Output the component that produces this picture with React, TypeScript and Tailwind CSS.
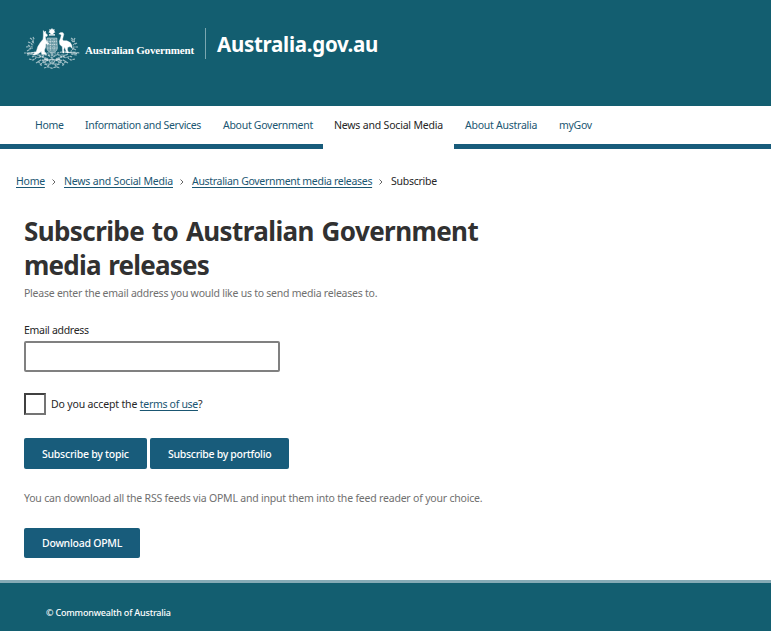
import type { ReactNode } from "react";

function CoatOfArms() {
  return (
    <svg viewBox="0 0 56 42" className="block h-[42px] w-[56px] shrink-0" fill="none">
      {/* commonwealth star and wreath */}
      <path d="M28 0l.9 1.6 1.8-.4-.5 1.8 1.2 1.3-1.7.6-.5 1.3h-2.6l-.4-1.3-1.8-.6 1.2-1.3-.4-1.8 1.8.4z" fill="#fff" />
      <path d="M25 6.9h6" stroke="#fff" strokeWidth="1.3" />
      {/* kangaroo */}
      <path d="M19.4 2.6l1.1 1.7.9-1.3.3 2.2 1.8 1.8-.5 1.2-1.8.4.6 2.6 1.3 3 1.6 1-.2.9-2.7-.4-.2 3.4-1.2 3 .2 2.6 1.6.8-.2.8h-4.2l-.4-3-2.8 2.2-1.8.4-1.8 1.2-2.4-.3 3.6-2.8 1.7-5.4 2.7-4.4 2.5-2.9.3-3.4z" fill="#fff" stroke="#fff" strokeWidth=".5" />
      {/* emu */}
      <path d="M34.8 5.8l2-1.4 2.2.3.8 1.6-.6 2.4-.7 2.6.8 1.4 3.6.1 3.4 1.8 1.6 2.8.2 2.8-2-1.6-2.3.6-.4 2.1.9 3.6h-1.4l-1.6-3.8-.6-2-1 2.3.4 3.6h-1.4l-.3-4-.1-2.2-2.5-2.3-.5-3.2 1.3-3.3.7-3.1-1.1-.6z" fill="#fff" stroke="#fff" strokeWidth=".4" />
      {/* quartered shield */}
      <path d="M23.3 10h9.6l.5 10c0 3-3 4.3-5.3 5.5-2.4-1.2-5.3-2.5-5.3-5.5z" fill="#fff" fillOpacity=".38" stroke="#fff" strokeOpacity=".5" strokeWidth=".8" />
      <path d="M23 13.4h10M23 16.6h10M23.2 20h10M26.4 11v12M30 11v12" stroke="#fff" strokeOpacity=".6" strokeWidth=".9" strokeDasharray="1.4 .9" />
      <g stroke="#fff" strokeOpacity=".58" strokeWidth="1.2" strokeDasharray="2.6 .7">
        {/* wattle sprays */}
        <path d="M3 23c2-1 4-2 5-5M4 14l3 1 2 3M6 10l3 2 .5 3M2 19l4-.5M9 9l1.5 3M4 17l3 2M5 21l4-1M8 13l2 3M47 10l3 2 1 4M51 10l-2 4M53 15l-4 2M54 19l-5 0M52 22l-4-2M49 14l-2-3M50 20l-3 3" />
        {/* grassy mount */}
        <path d="M0 25h7l4-1h8l4 1h10l5-1h10l8 1M3 27l6-1M12 26l6 3 5-3M33 26l5 3 6-3M47 26l6 1M14 27h28" />
        {/* scroll and foliage */}
        <path d="M8 29c3-2 5 2 8 0s4 3 7 1M48 29c-3-2-5 2-8 0s-4 3-7 1M5 31l4 1 3-2M51 31l-4 1-3-2M12 35l5-3 5 2M44 35l-5-3-5 2M16 37l3-3 5 4M40 37l-3-3-5 4M23 30l3 4-2 5M33 30l-3 4 2 5M14 33l4 5M42 33l-4 5M21 29v8M35 29v8M18 32h20M21 36h14" />
        <path d="M24 27l4 3 4-3M22 33l6-2 6 2M20 40l4-1.2 4 1.5 4-1.5 4 1.2M28 26v8" />
      </g>
      <path d="M3 25.4l12-1.3M41 24.1l12 1.3M20 31l4 1M32 32l4-1M26 35h4" stroke="#fff" strokeWidth="1" strokeOpacity=".8" />
    </svg>
  );
}

function NavItem({ size, active, children }: { size: string; active?: boolean; children: ReactNode }) {
  return (
    <li className={`${size} border-b-5 pt-[12px] whitespace-nowrap ${active ? "border-white text-[#262626]" : "border-[#185c7b] text-[#1a5672]"}`}>
      <a className="block pl-[11px] leading-[15px]">{children}</a>
    </li>
  );
}

function Chevron() {
  return (
    <svg viewBox="0 0 4 6" className="mt-[6px] h-[6px] w-[4px] shrink-0" fill="none" stroke="#666">
      <path d="M.5.5L3 3 .5 5.5" />
    </svg>
  );
}

function Button({ size, children }: { size: string; children: ReactNode }) {
  return (
    <button className={`${size} rounded-[2px] bg-[#185c7b] pl-[18px] text-left text-[10.5px] font-medium whitespace-nowrap text-white`}>
      {children}
    </button>
  );
}

export default function App() {
  return (
    <div className="flex h-[631px] w-[771px] flex-col overflow-hidden bg-white font-['Noto_Sans',sans-serif] text-[10.5px] leading-[16px] text-[#262626]">
      <header className="flex h-[106px] shrink-0 items-start bg-[#135e70] pt-[28px] pl-[24px] text-white">
        <CoatOfArms />
        <span className="mt-[14px] ml-[5px] w-[120px] font-['Liberation_Serif',serif] text-[11px] font-bold tracking-[-0.15px] whitespace-nowrap">
          Australian Government
        </span>
        <div className="flex h-[31px] items-center border-l border-[#7ba7b0] pl-[11px] text-[20.5px] font-bold whitespace-nowrap">
          <span className="tracking-[-0.28px]">Australia.gov.au</span>
        </div>
      </header>

      <nav className="h-[43px] shrink-0">
        <ul className="flex h-full">
          <li className="w-[24px] border-b-5 border-[#185c7b]" />
          <NavItem size="w-[50px] tracking-[-0.35px]">Home</NavItem>
          <NavItem size="w-[138px] tracking-[-0.32px]">Information and Services</NavItem>
          <NavItem size="w-[111px] tracking-[-0.28px]">About Government</NavItem>
          <NavItem size="w-[131px] tracking-[-0.19px]" active>News and Social Media</NavItem>
          <NavItem size="w-[94px] tracking-[-0.25px]">About Australia</NavItem>
          <NavItem size="w-[223px] tracking-[-0.3px]">myGov</NavItem>
        </ul>
      </nav>

      <div className="mt-[24px] ml-[16px] flex shrink-0 text-[#1a5672]">
        <a className="w-[36px] tracking-[-0.25px] whitespace-nowrap underline underline-offset-2">Home</a>
        <Chevron />
        <a className="ml-[8px] w-[116px] tracking-[-0.19px] whitespace-nowrap underline underline-offset-2">News and Social Media</a>
        <Chevron />
        <a className="ml-[8px] w-[187px] tracking-[-0.31px] whitespace-nowrap underline underline-offset-2">Australian Government media releases</a>
        <Chevron />
        <span className="ml-[8px] tracking-[-0.25px] whitespace-nowrap text-[#262626]">Subscribe</span>
      </div>

      <main className="flex grow flex-col items-start pt-[25px] pl-[24px]">
        <h1 className="text-[26px] leading-[34px] font-bold tracking-[-0.6px] [word-spacing:1.6px] whitespace-nowrap text-[#313131]">
          Subscribe to Australian Government<br /><span className="tracking-[-0.8px]">media releases</span>
        </h1>
        <p className="mt-[3px] tracking-[-0.24px] whitespace-nowrap text-[#707070]">Please enter the email address you would like us to send media releases to.</p>
        <label className="mt-[21px] tracking-[-0.3px]">Email address</label>
        <input className="mt-[3px] h-[31px] w-[256px] rounded-[2px] border-2 border-[#808080]" />
        <label className="mt-[21px] flex items-center tracking-[-0.15px] whitespace-nowrap">
          <span className="mr-[5px] h-[22px] w-[22px] border-2 border-t-[#404040] border-r-[#747474] border-b-[#747474] border-l-[#404040]" />
          Do you accept the&nbsp;<a className="tracking-[-0.3px] text-[#1a5672] underline underline-offset-2">terms of use</a>?
        </label>
        <div className="mt-[23px] flex gap-[3px]">
          <Button size="h-[31px] w-[123px] tracking-[-0.25px]">Subscribe by topic</Button>
          <Button size="h-[31px] w-[139px] tracking-[-0.3px]">Subscribe by portfolio</Button>
        </div>
        <p className="mt-[21px] mb-[22px] tracking-[-0.2px] whitespace-nowrap text-[#707070]">You can download all the RSS feeds via OPML and input them into the feed reader of your choice.</p>
        <Button size="h-[30px] w-[116px] tracking-[-0.25px]">Download OPML</Button>
      </main>

      <footer className="h-[51px] shrink-0 border-t-3 border-[#86abb6] bg-[#135e70] pt-[22px] pl-[46px] text-[9px] font-medium tracking-[-0.19px] text-white">
        © Commonwealth of Australia
      </footer>
    </div>
  );
}
